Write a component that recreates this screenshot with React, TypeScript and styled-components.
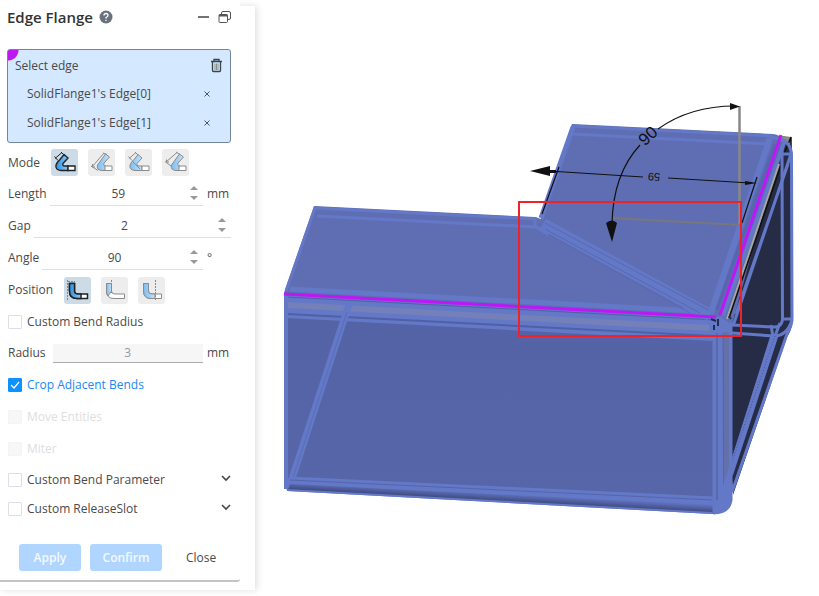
import React, { useState } from "react";
import styled, { createGlobalStyle } from "styled-components";

const GlobalStyle = createGlobalStyle`
  * { box-sizing: border-box; }
  body {
    margin: 0;
    background: #fff;
    color: #4a4a4a;
    font: 12px/20px "Open Sans", "Noto Sans", sans-serif;
  }
  button, input { font: inherit; color: inherit; }
`;

const Page = styled.main`
  display: flex;
  min-height: 100vh;
  overflow: hidden;
`;

const Sidebar = styled.aside`
  flex: 0 0 255px;
  margin: 6px 0;
  box-shadow: 2px 0 7px rgba(0, 0, 0, 0.13);
  clip-path: inset(-6px -12px -6px 0);
`;

const Panel = styled.form`
  width: 240px;
  margin-top: -6px;
  padding: 5px 9px 9px 8px;
  border-bottom: 2px solid #c4c4c4;
  border-radius: 0 0 3px 0;
  background: #fff;
`;

const Header = styled.header`
  display: flex;
  align-items: center;
  gap: 6px;
  height: 24px;
`;

const Title = styled.h1`
  margin: 0 0 0 -1px;
  font-size: 15px;
  line-height: 24px;
  font-weight: 600;
  color: #333;
`;

const IconButton = styled.button`
  display: inline-flex;
  padding: 0;
  border: 0;
  background: none;
  cursor: pointer;
`;

const HeaderActions = styled.div`
  display: flex;
  align-items: center;
  gap: 9px;
  margin-left: auto;
`;

const Selection = styled.section`
  height: 94px;
  margin: 20px 0 4px -1px;
  padding: 2px 7px 0 7px;
  border: 1px solid #74859a;
  border-radius: 3px;
  background: radial-gradient(circle at 0 0, #bf16f8 10px, transparent 11px), #d4e8ff;
`;

const SelectionRow = styled.div<{ $item?: boolean }>`
  display: flex;
  align-items: center;
  justify-content: space-between;
  height: ${(p) => (p.$item ? 29 : 27)}px;
  padding: ${(p) => (p.$item ? "0 11px 0 12px" : "0")};
`;

const Row = styled.div<{ $height?: number }>`
  display: flex;
  align-items: center;
  height: ${(p) => p.$height ?? 32}px;
`;

const ToolGroup = styled.div`
  display: flex;
  gap: 10px;
  margin-left: 11px;
`;

const Tool = styled.button<{ $active?: boolean }>`
  display: flex;
  width: 27px;
  height: 27px;
  padding: 0;
  border: 0;
  border-radius: 3px;
  background: ${(p) => (p.$active ? "#cddbe6" : "#ededed")};
`;

const NumberField = styled.div`
  display: flex;
  align-items: center;
  flex: 1;
  min-width: 0;
  height: 24px;
  margin-left: 3px;
  border-bottom: 1px solid #dcdfe6;
  &:has(input:disabled) {
    height: 19px;
    margin-left: 7px;
    background: #f6f6f6;
    border-color: #aaa;
    color: #999;
  }
`;

const NumberInput = styled.input`
  flex: 1;
  min-width: 0;
  height: 100%;
  padding: 0;
  border: 0;
  background: none;
  text-align: center;
  outline: 0;
`;

const Unit = styled.span`
  width: 28px;
  padding-left: 4px;
`;

const CheckLabel = styled.label<{ $state?: "on" | "off" }>`
  display: flex;
  align-items: center;
  gap: 5px;
  color: ${(p) => (p.$state === "on" ? "#1a87f5" : p.$state === "off" ? "#dedede" : "inherit")};
  font-weight: ${(p) => (p.$state === "on" ? 500 : 400)};
`;

const CheckBox = styled.input`
  appearance: none;
  width: 14px;
  height: 14px;
  margin: 0;
  border: 1px solid #dcdfe6;
  border-radius: 1px;
  background: #fff;
  &:checked {
    border-color: #0d92fb;
    background: #0d92fb
      url("data:image/svg+xml,%3Csvg xmlns='http://www.w3.org/2000/svg' viewBox='0 0 12 12'%3E%3Cpath d='M2 6l3 3 5-6' fill='none' stroke='white' stroke-width='1.3'/%3E%3C/svg%3E");
  }
  &:disabled { background: #f7f7f7; border-color: #f4f4f4; }
`;

const Expand = styled(IconButton)`
  margin: 0 0 4px auto;
`;

const Footer = styled.footer`
  display: flex;
  gap: 9px;
  margin: 21px 0 0 11px;
`;

const Action = styled.button<{ $width: number; $plain?: boolean }>`
  width: ${(p) => p.$width}px;
  height: 27px;
  padding: 0;
  border: 0;
  border-radius: 3px;
  background: ${(p) => (p.$plain ? "none" : "#b0d6ff")};
  color: ${(p) => (p.$plain ? "#4a4a4a" : "#f3f9ff")};
  font-weight: ${(p) => (p.$plain ? 400 : 600)};
`;

const Viewport = styled.section`
  flex: 1;
  min-width: 0;
`;

const Scene = styled.svg`
  display: block;
  width: 100%;
`;

const BendGradient = ({ id, active }: { id: string; active?: boolean }) => (
  <linearGradient id={id} x1="0" y1="0" x2="1" y2="0">
    <stop offset="0" stopColor={active ? "#2f8fdf" : "#7dbdf0"} />
    <stop offset="1" stopColor={active ? "#8cc9f8" : "#c5e2f8"} />
  </linearGradient>
);

function ModeIcon({ kind, active }: { kind: number; active?: boolean }) {
  const ink = active ? "#222" : "#8b8b8b";
  const id = `mode-${kind}`;
  const body = kind % 2 === 0
    ? "M13 5.500L17 9L12 14.500Q11 17 14 17H17V21.500H10Q4 21 5 16Q6 13 9 10.500Z"
    : "M17.500 5L21.500 8L16 14Q15 17 17 17H18V21.500H14Q8 21 9.500 16Z";
  const guides = [
    "M4 9.500L11 3.500M3.500 7.500L7 11.500M10 3L13 6",
    "M4 18L16 4M3 17L10 21.500M15 4L19 5.500M4.500 15V18H7",
    "M4 9.500L11 3.500M3.500 7.500L7 11.500M10 3L13 6M7 12L15 20",
    "M4 13L15 3.500M3 12.500L9 17M14 3L18 5.500M4.500 10.500V13H7",
  ];
  return (
    <svg width="27" height="27" viewBox="0 0 27 27" fill="none" stroke={ink} strokeWidth={active ? 1.4 : 1}>
      <defs><BendGradient id={id} active={active} /></defs>
      <path d={body} fill={`url(#${id})`} />
      <path d="M17 17H24V21.500H17Z" fill="#fff" />
      <path d={guides[kind]} strokeWidth="1" />
    </svg>
  );
}

function PositionIcon({ kind, active }: { kind: number; active?: boolean }) {
  const ink = active ? "#222" : "#8b8b8b";
  const id = `position-${kind}`;
  return (
    <svg width="27" height="27" viewBox="0 0 27 27" fill="none" stroke={ink} strokeWidth={active ? 1.5 : 1}>
      <defs><BendGradient id={id} active={active} /></defs>
      <path d="M5.500 6.500H10.500V14Q10.500 17 14 17H23.500V21.500H13Q5.500 21.500 5.500 14Z" fill="#fff" />
      <path
        d={kind === 1
          ? "M5.500 6.500H10.500V14L7 19Q5.500 17 5.500 14Z"
          : "M5.500 6.500H10.500V14Q10.500 17 14 17H17V21.500H13Q5.500 21.500 5.500 14Z"}
        fill={`url(#${id})`}
      />
      <path d={["M3.500 3V24M4 4.500H11", "M10.500 3V16", "M17.500 3V24"][kind]} stroke="#888" strokeWidth="1" strokeDasharray="2 1" />
    </svg>
  );
}

const Spinner = () => (
  <svg width="16" height="20" viewBox="0 0 16 20" fill="#999" aria-hidden="true">
    <path d="M3 6L7 2L11 6ZM3 12H11L7 16Z" />
  </svg>
);

function Field({ label, value, unit, disabled }: { label: string; value: string; unit?: string; disabled?: boolean }) {
  const [text, setText] = useState(value);
  const id = `field-${label}`;
  return (
    <Row>
      <label htmlFor={id}>{label}</label>
      <NumberField>
        <NumberInput id={id} value={text} disabled={disabled} onChange={(e) => setText(e.target.value)} />
        {!disabled && <Spinner />}
      </NumberField>
      {unit && <Unit>{unit}</Unit>}
    </Row>
  );
}

interface OptionProps {
  label: string;
  height?: number;
  checked?: boolean;
  disabled?: boolean;
  expandable?: boolean;
}

function Option({ label, height, checked, disabled, expandable }: OptionProps) {
  const [on, setOn] = useState(!!checked);
  return (
    <Row $height={height}>
      <CheckLabel $state={disabled ? "off" : on ? "on" : undefined}>
        <CheckBox type="checkbox" checked={on} disabled={disabled} onChange={(e) => setOn(e.target.checked)} />
        {label}
      </CheckLabel>
      {expandable && (
        <Expand type="button" aria-label={`Expand ${label}`}>
          <svg width="10" height="8" viewBox="0 0 10 8" fill="none" stroke="#444" strokeWidth="1.6"><path d="M1 2L5 6L9 2" /></svg>
        </Expand>
      )}
    </Row>
  );
}

function Model() {
  return (
    <Scene viewBox="255 0 564 596" role="img" aria-label="Sheet metal flange preview">
      <defs>
        <linearGradient id="lower-bend" gradientUnits="userSpaceOnUse" x1="500" y1="494" x2="499.500" y2="503">
          <stop offset="0" stopColor="#5e70bd" />
          <stop offset="1" stopColor="#353f68" />
        </linearGradient>
        <linearGradient id="front-face" x1="0" y1="0" x2="0" y2="1">
          <stop offset="0" stopColor="#5363a5" />
          <stop offset="1" stopColor="#5666a8" />
        </linearGradient>
      </defs>

      {/* faces */}
      <path d="M770 140L784 136Q792 142 792 152L793 320Q791 332 787 337L733 495L722 330Z" fill="#272c46" />
      <path d="M314 206L535 217L541 219L572 124L773 134Q781 135 783 140L731 328L716 338L285 318L284 293Z" fill="#5f6eb3" />
      <path d="M284 293L722 317L731 325L730 504Q724 514 712 514L288 491L284 487Z" fill="#6478c8" />
      <path d="M287 318L713 341V497L287 478Z" fill="url(#front-face)" />
      <path d="M287 302L709 325V331L287 308Z" fill="#7380b9" />
      <path d="M287 297L715 320" stroke="#50609f" strokeWidth="1" />
      <path d="M287 314L713 336" stroke="#5060a4" strokeWidth="2" />
      <path d="M717 333V500M723 333L724 492" stroke="#55659f" strokeWidth="1.500" />
      <path d="M724 332H729V472L724 486Z" fill="#6370aa" />

      {/* model edges */}
      <g fill="none" stroke="#6478c8" strokeWidth="4">
        <path d="M286 294V489" />
        <path d="M349 304L290 485" strokeWidth="7" />
        <path d="M347 312L292 481" stroke="#5b6db8" strokeWidth="1" />
        <path d="M286 291L315 208L536 219M317 216L536 227" strokeWidth="3" />
        <path d="M290 289L714 312" strokeWidth="5" />
        <path d="M289 478L713 498M289 484L722 503" strokeWidth="3" />
        <path d="M290 480L713 500" stroke="#5565ab" strokeWidth="1" />
        <path d="M290 484L714 505V513L288 490Z" fill="url(#lower-bend)" stroke="none" />
        <path d="M287 490L712 513" strokeWidth="2" />
        <path d="M535 217V226L549 235" strokeWidth="3" />
        <path d="M542 219L573 126L773 136M572 134L770 144" strokeWidth="3" />
        <path d="M541 218L573 127" strokeWidth="5" />
        <path d="M543 224L710 315" strokeWidth="12" />
        <path d="M545 223L712 312M545 229L700 313M548 234L690 313" stroke="#5969af" strokeWidth="1" />
        <path d="M711 312L770 138" strokeWidth="6" />
        <path d="M717 310L775 144M725 309L782 143" stroke="#5565ae" strokeWidth="3" />
        <path d="M723 316L785 140" strokeWidth="4" />
      </g>
      <path d="M775 139L784 136L791 137V149Q784 140 775 139Z" fill="#898987" />
      <path d="M779 164L727 319" stroke="#a8a89e" strokeWidth="2" />
      <path d="M781 165L729 318M784 154L791 137V150" fill="none" stroke="#111" strokeWidth="1.500" />
      <g fill="none" stroke="#6478c8" strokeWidth="3">
        <path d="M770 137Q791 138 791.500 155L792 318Q792 326 787 334L732 492" />
        <path d="M782 150L782.500 319Q782 328 772 327L732 325M732 333L774 336Q787 336 792 320M783 319H792M771 325L773 337M780 323L775 336" />
        <path d="M782 154H791L733 326M788 164L736 314" />
        <path d="M773 334L720 502M777 334L731 475" strokeWidth="4" />
        <path d="M775 336L731 465" stroke="#46558f" strokeWidth="1" strokeDasharray="1 2" />
        <path d="M714 333V513M721 330V500M731 322V500Q729 513 713 513" />
        <path d="M722 498L725 485L731 470M715 503L731 498" />
      </g>

      {/* selected edges */}
      <path d="M284 294L716 317M720 315L781 135" stroke="#bf16f8" strokeWidth="3" />
      <path d="M711 319L716 321M714 325V330M718 319V326M729 316L731 319" stroke="#222b4c" strokeWidth="2" />

      {/* angle dimension */}
      <path d="M739.500 106V225" stroke="#888" strokeWidth="2.500" />
      <path d="M611 218L741 225" stroke="#77777c" strokeWidth="2" />
      <g fill="none" stroke="#111" strokeWidth="1.200">
        <path d="M735 106Q690 106 658 129M640 145Q613 174 612 224" />
        <path d="M549 171L643 177M668 178L750 183M757 177L742 223M559 167L542 214" />
      </g>
      <g fill="#111">
        <path d="M740 106.500L730 103V110ZM612 242L606 223Q612 218 617 223ZM530 171L550 166V176ZM757 183L745 181V185ZM549 170H556V173H549Z" />
        <text x="0" y="0" transform="translate(648 136) rotate(-42)" textAnchor="middle" dominantBaseline="central" fontFamily="Liberation Sans, sans-serif" fontSize="17">90</text>
        <text x="0" y="0" transform="translate(654 177) rotate(183)" textAnchor="middle" dominantBaseline="central" fontFamily="Liberation Sans, sans-serif" fontSize="11">59</text>
      </g>
      <rect x="519" y="202" width="222" height="134" fill="none" stroke="#ef2229" strokeWidth="2" />
    </Scene>
  );
}

export default function App() {
  return (
    <>
      <GlobalStyle />
      <Page>
        <Sidebar>
          <Panel onSubmit={(e) => e.preventDefault()}>
            <Header>
              <Title>Edge Flange</Title>
              <IconButton type="button" aria-label="Help">
                <svg width="14" height="14" viewBox="0 0 14 14" fill="none">
                  <circle cx="7" cy="7" r="6.500" fill="#68737d" />
                  <path d="M5 5.500Q5 3.500 7 3.500T9 5.500Q9 6.500 7 7.500V8.500M7 9.700V11" stroke="#fff" strokeWidth="1.300" />
                </svg>
              </IconButton>
              <HeaderActions>
                <IconButton type="button" aria-label="Minimize">
                  <svg width="12" height="12" stroke="#444" strokeWidth="1.500"><path d="M1 6H12" /></svg>
                </IconButton>
                <IconButton type="button" aria-label="Float panel">
                  <svg width="13" height="13" viewBox="0 0 13 13" fill="none" stroke="#555" strokeWidth="1">
                    <path d="M3.500 3V2Q3.500 .5 5 .5H11Q12.500 .5 12.500 2V7Q12.500 8.500 11 8.500H10" />
                    <rect x="1" y="3.500" width="8.500" height="8" rx="1" />
                    <path d="M1 4.500H9.500" strokeWidth="2" />
                  </svg>
                </IconButton>
              </HeaderActions>
            </Header>

            <Selection aria-label="Selected edges">
              <SelectionRow>
                <span>Select edge</span>
                <IconButton type="button" aria-label="Clear selection">
                  <svg width="13" height="15" viewBox="0 0 13 15" fill="none" stroke="#39434d" strokeWidth="1.300">
                    <path d="M1 3.500H12M4 3V1.500H9V3M2.500 4V12.500Q2.500 13.500 3.500 13.500H9.500Q10.500 13.500 10.500 12.500V4" />
                    <path d="M5 5.500V12M6.500 5.500V12M8 5.500V12" stroke="#8a8d88" strokeWidth="1" />
                  </svg>
                </IconButton>
              </SelectionRow>
              {[0, 1].map((n) => (
                <SelectionRow key={n} $item>
                  <span>SolidFlange1's Edge[{n}]</span>
                  <IconButton type="button" aria-label={`Remove edge ${n}`}>
                    <svg width="10" height="10" stroke="#555" strokeWidth="1"><path d="M2.500 2.500L7.500 7.500M7.500 2.500L2.500 7.500" /></svg>
                  </IconButton>
                </SelectionRow>
              ))}
            </Selection>

            <Row $height={31}>
              <span>Mode</span>
              <ToolGroup role="group" aria-label="Mode">
                {[0, 1, 2, 3].map((n) => (
                  <Tool key={n} type="button" $active={n === 0} aria-pressed={n === 0} aria-label={`Mode ${n + 1}`}>
                    <ModeIcon kind={n} active={n === 0} />
                  </Tool>
                ))}
              </ToolGroup>
            </Row>
            <Field label="Length" value="59" unit="mm" />
            <Field label="Gap" value="2" />
            <Field label="Angle" value="90" unit="°" />
            <Row>
              <span>Position</span>
              <ToolGroup role="group" aria-label="Position">
                {[0, 1, 2].map((n) => (
                  <Tool key={n} type="button" $active={n === 0} aria-pressed={n === 0} aria-label={`Position ${n + 1}`}>
                    <PositionIcon kind={n} active={n === 0} />
                  </Tool>
                ))}
              </ToolGroup>
            </Row>
            <Option label="Custom Bend Radius" height={31} />
            <Field label="Radius" value="3" unit="mm" disabled />
            <Option label="Crop Adjacent Bends" checked />
            <Option label="Move Entities" disabled />
            <Option label="Miter" disabled />
            <Option label="Custom Bend Parameter" height={29} expandable />
            <Option label="Custom ReleaseSlot" height={29} expandable />

            <Footer>
              <Action $width={62} disabled>Apply</Action>
              <Action $width={73} disabled>Confirm</Action>
              <Action $width={60} type="button" $plain>Close</Action>
            </Footer>
          </Panel>
        </Sidebar>
        <Viewport><Model /></Viewport>
      </Page>
    </>
  );
}
